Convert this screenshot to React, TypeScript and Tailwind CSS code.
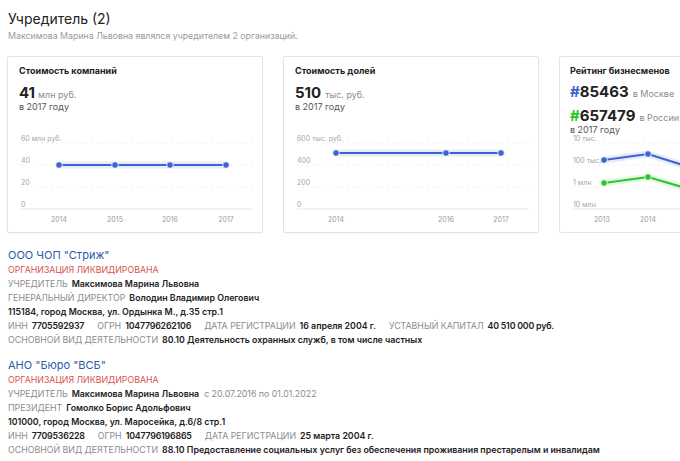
import React from 'react';

type Pt = [number, number];

function Grid({ labels }: { labels: string[] }) {
  const ys = [13, 35, 57, 79];
  return (
    <g>
      {ys.map((y, i) => (
        <g key={i}>
          <line
            x1={13}
            x2={245}
            y1={y}
            y2={y}
            stroke={i === 3 ? '#e6e6e6' : '#efefef'}
            strokeWidth={1}
            strokeDasharray={i === 3 ? undefined : '2 3'}
          />
          <text x={13} y={y - 2} fontSize="7" fill="#a6a6a6">
            {labels[i]}
          </text>
        </g>
      ))}
    </g>
  );
}

function Series({ pts, color }: { pts: Pt[]; color: string }) {
  return (
    <g>
      <polyline
        points={pts.map((p) => p.join(',')).join(' ')}
        fill="none"
        stroke={color}
        strokeOpacity={0.12}
        strokeWidth={7}
      />
      <polyline
        points={pts.map((p) => p.join(',')).join(' ')}
        fill="none"
        stroke={color}
        strokeWidth={2.2}
      />
      {pts.map((p, i) => (
        <circle key={i} cx={p[0]} cy={p[1]} r={3.3} fill={color} stroke="#fff" strokeWidth={0.8} />
      ))}
    </g>
  );
}

function Chart({
  labels,
  years,
  series,
}: {
  labels: string[];
  years: [number, string][];
  series: { pts: Pt[]; color: string }[];
}) {
  return (
    <svg width={256} height={100} className="block" style={{ fontFamily: 'Inter, sans-serif' }}>
      <Grid labels={labels} />
      {series.map((s, i) => (
        <Series key={i} pts={s.pts} color={s.color} />
      ))}
      {years.map(([x, t]) => (
        <text key={t} x={x} y={92} fontSize="7" fill="#9a9a9a" textAnchor="middle">
          {t}
        </text>
      ))}
    </svg>
  );
}

function Card({ children, chart }: { children: React.ReactNode; chart: React.ReactNode }) {
  return (
    <div className="w-[256px] h-[177px] shrink-0 border border-[#e4e4e4] rounded-[2px] bg-white shadow-[0_1px_2px_rgba(0,0,0,0.04)]">
      <div className="h-[73px] pl-[11px] pt-[7px]">{children}</div>
      {chart}
    </div>
  );
}

const BLUE = '#3e62cf';
const GREEN = '#2cc42c';

function Row({ children }: { children: React.ReactNode }) {
  return <div className="text-[8.8px] leading-[14px] text-[#222] whitespace-nowrap">{children}</div>;
}

function L({ children }: { children: React.ReactNode }) {
  return <span className="text-[#8c8c8c] font-normal mr-[4px]">{children}</span>;
}

function V({ children }: { children: React.ReactNode }) {
  return <span className="font-semibold text-[#222]">{children}</span>;
}

function N({ children }: { children: React.ReactNode }) {
  return <span className="font-semibold text-[#222] tracking-[-0.2px]">{children}</span>;
}

function Gap() {
  return <span className="inline-block w-[13px]" />;
}

function Org({ name, rows }: { name: string; rows: React.ReactNode[] }) {
  return (
    <div>
      <div className="text-[11px] leading-[16px] text-[#2b5aa8]">{name}</div>
      <div className="text-[8.8px] leading-[14px] text-[#d9534f] uppercase">Организация ликвидирована</div>
      {rows.map((r, i) => (
        <Row key={i}>{r}</Row>
      ))}
    </div>
  );
}

export default function App() {
  return (
    <div
      className="w-[680px] h-[461px] overflow-hidden bg-white text-[#222]"
      style={{ fontFamily: 'Inter, "Noto Sans", sans-serif' }}
    >
      <div className="pl-[8px] pt-[10px]">
        <h1 className="text-[14px] leading-[18px] text-[#222]">Учредитель (2)</h1>
        <p className="text-[8.8px] leading-[14px] text-[#9a9a9a] mt-[1px]">
          Максимова Марина Львовна являлся учредителем 2 организаций.
        </p>
      </div>

      {/* графики */}
      <div className="flex gap-[20px] pl-[7px] mt-[13px]">
        <Card
          chart={
            <Chart
              labels={['60 млн руб.', '40', '20', '0']}
              years={[[51, '2014'], [107, '2015'], [162, '2016'], [218, '2017']]}
              series={[{ pts: [[51, 35], [107, 35], [162, 35], [218, 35]], color: BLUE }]}
            />
          }
        >
          <div className="text-[9px] font-bold leading-[14px]">Стоимость компаний</div>
          <div className="mt-[7px] leading-[14px]">
            <span className="text-[15px] font-bold">41</span>
            <span className="text-[9px] text-[#8c8c8c] ml-[3px]">млн руб.</span>
          </div>
          <div className="-mt-[1px] text-[9px] leading-[11px] text-[#555]">в 2017 году</div>
        </Card>

        <Card
          chart={
            <Chart
              labels={['600 тыс. руб.', '400', '200', '0']}
              years={[[52, '2014'], [162, '2016'], [217, '2017']]}
              series={[{ pts: [[52, 23], [162, 23], [217, 23]], color: BLUE }]}
            />
          }
        >
          <div className="text-[9px] font-bold leading-[14px]">Стоимость долей</div>
          <div className="mt-[7px] leading-[14px]">
            <span className="text-[15px] font-bold">510</span>
            <span className="text-[9px] text-[#8c8c8c] ml-[4px]">тыс. руб.</span>
          </div>
          <div className="-mt-[1px] text-[9px] leading-[11px] text-[#555]">в 2017 году</div>
        </Card>

        <div className="w-[256px] h-[177px] shrink-0 border border-[#e4e4e4] rounded-[2px] bg-white">
          <div className="h-[73px] pl-[10px] pt-[7px]">
            <div className="text-[9px] font-bold leading-[14px]">Рейтинг бизнесменов</div>
            <div className="mt-[4px] leading-[18px] whitespace-nowrap">
              <span className="text-[15px] font-bold" style={{ color: BLUE }}>#</span>
              <span className="text-[15px] font-bold">85463</span>
              <span className="text-[9px] text-[#8c8c8c] ml-[4px]">в Москве</span>
            </div>
            <div className="mt-[6px] leading-[12px] whitespace-nowrap">
              <span className="text-[15px] font-bold" style={{ color: GREEN }}>#</span>
              <span className="text-[15px] font-bold">657479</span>
              <span className="text-[9px] text-[#8c8c8c] ml-[4px]">в России</span>
            </div>
            <div className="text-[9px] leading-[11px] text-[#555]">в 2017 году</div>
          </div>
          <svg width={256} height={100} className="block" style={{ fontFamily: 'Inter, sans-serif' }}>
            <Grid labels={['10 тыс.', '100 тыс.', '1 млн', '10 млн']} />
            <Series pts={[[44, 30], [88, 24], [132, 38]]} color={BLUE} />
            <Series pts={[[44, 53], [88, 47], [132, 60]]} color={GREEN} />
            <text x={42} y={92} fontSize="7" fill="#9a9a9a" textAnchor="middle">2013</text>
            <text x={88} y={92} fontSize="7" fill="#9a9a9a" textAnchor="middle">2014</text>
          </svg>
        </div>
      </div>

      {/* организации */}
      <div className="pl-[8px] mt-[14px] flex flex-col gap-[10px]">
        <Org
          name={'ООО ЧОП "Стриж"'}
          rows={[
            <>
              <L>УЧРЕДИТЕЛЬ</L>
              <V>Максимова Марина Львовна</V>
            </>,
            <>
              <L>ГЕНЕРАЛЬНЫЙ ДИРЕКТОР</L>
              <V>Володин Владимир Олегович</V>
            </>,
            <V>115184, город Москва, ул. Ордынка М., д.35 стр.1</V>,
            <>
              <L>ИНН</L>
              <N>7705592937</N>
              <Gap />
              <L>ОГРН</L>
              <N>1047796262106</N>
              <Gap />
              <L>ДАТА РЕГИСТРАЦИИ</L>
              <V>16 апреля 2004 г.</V>
              <Gap />
              <L>УСТАВНЫЙ КАПИТАЛ</L>
              <N>40 510 000 руб.</N>
            </>,
            <>
              <L>ОСНОВНОЙ ВИД ДЕЯТЕЛЬНОСТИ</L>
              <V>80.10 Деятельность охранных служб, в том числе частных</V>
            </>,
          ]}
        />
        <Org
          name={'АНО "Бюро "ВСБ"'}
          rows={[
            <>
              <L>УЧРЕДИТЕЛЬ</L>
              <V>Максимова Марина Львовна</V>
              <span className="text-[#8c8c8c] ml-[5px]">с 20.07.2016 по 01.01.2022</span>
            </>,
            <>
              <L>ПРЕЗИДЕНТ</L>
              <V>Гомолко Борис Адольфович</V>
            </>,
            <V>101000, город Москва, ул. Маросейка, д.6/8 стр.1</V>,
            <>
              <L>ИНН</L>
              <N>7709536228</N>
              <Gap />
              <L>ОГРН</L>
              <N>1047796196865</N>
              <Gap />
              <L>ДАТА РЕГИСТРАЦИИ</L>
              <V>25 марта 2004 г.</V>
            </>,
            <>
              <L>ОСНОВНОЙ ВИД ДЕЯТЕЛЬНОСТИ</L>
              <V>88.10 Предоставление социальных услуг без обеспечения проживания престарелым и инвалидам</V>
            </>,
          ]}
        />
      </div>
    </div>
  );
}
